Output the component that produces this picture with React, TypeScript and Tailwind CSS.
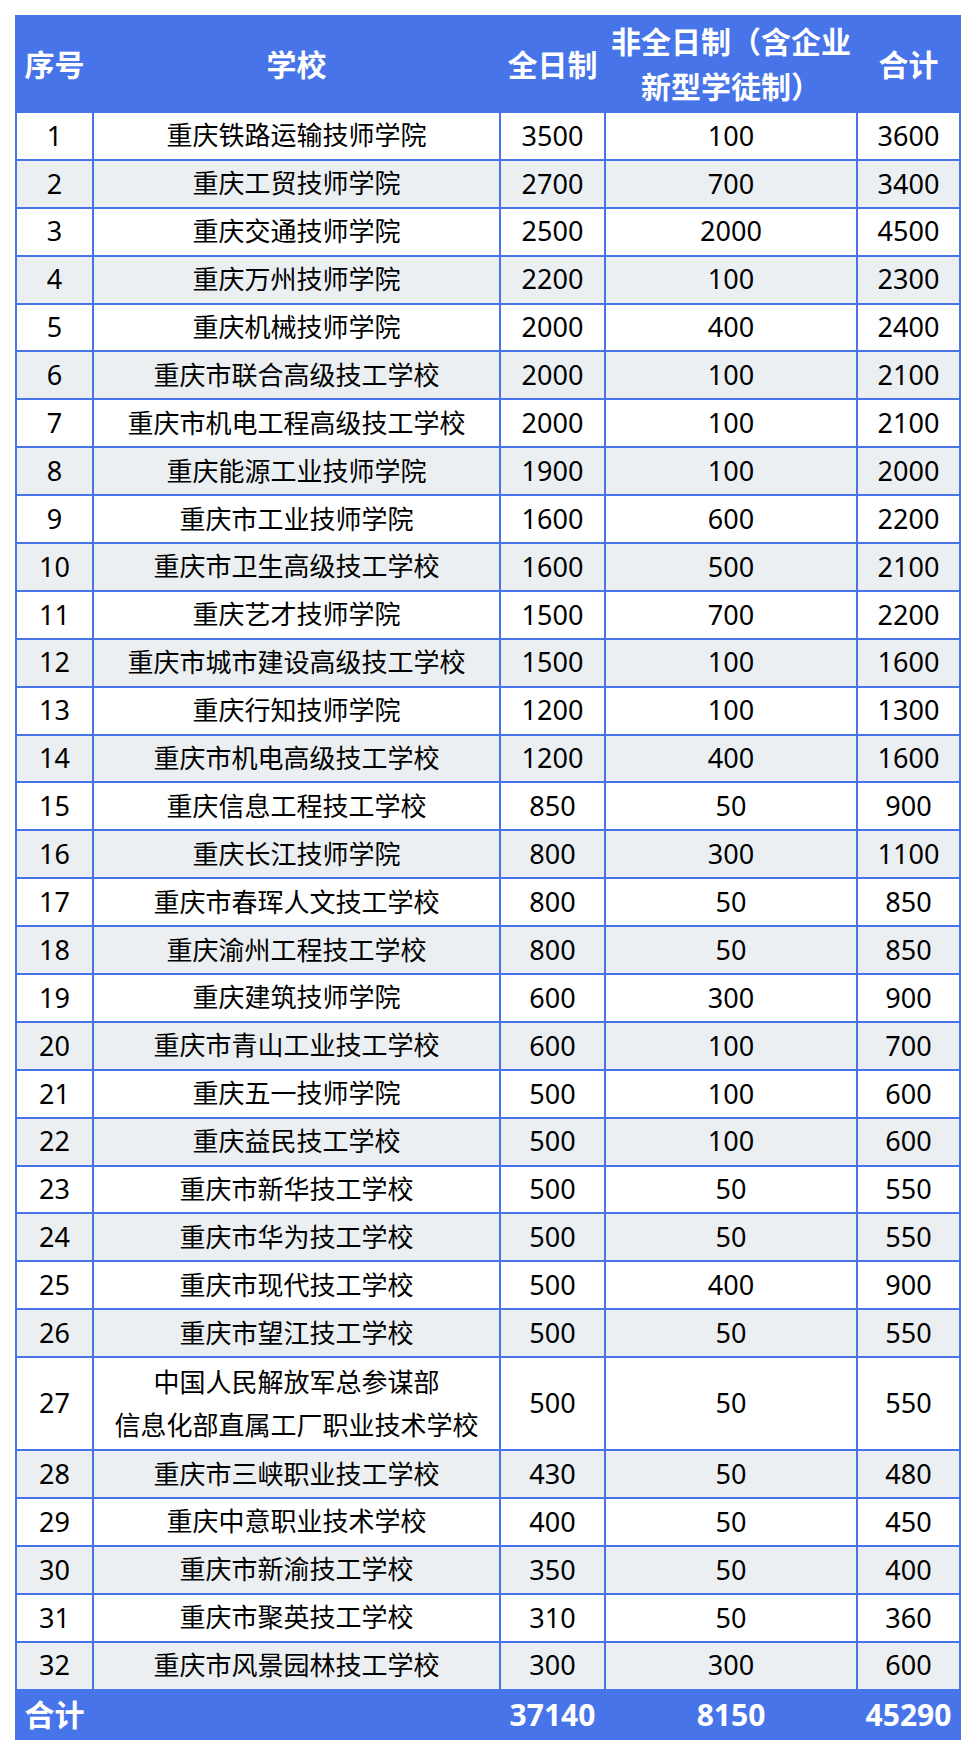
type Row = [string, string, string, string];

const ROWS: Row[] = [
  ['重庆铁路运输技师学院', '3500', '100', '3600'],
  ['重庆工贸技师学院', '2700', '700', '3400'],
  ['重庆交通技师学院', '2500', '2000', '4500'],
  ['重庆万州技师学院', '2200', '100', '2300'],
  ['重庆机械技师学院', '2000', '400', '2400'],
  ['重庆市联合高级技工学校', '2000', '100', '2100'],
  ['重庆市机电工程高级技工学校', '2000', '100', '2100'],
  ['重庆能源工业技师学院', '1900', '100', '2000'],
  ['重庆市工业技师学院', '1600', '600', '2200'],
  ['重庆市卫生高级技工学校', '1600', '500', '2100'],
  ['重庆艺才技师学院', '1500', '700', '2200'],
  ['重庆市城市建设高级技工学校', '1500', '100', '1600'],
  ['重庆行知技师学院', '1200', '100', '1300'],
  ['重庆市机电高级技工学校', '1200', '400', '1600'],
  ['重庆信息工程技工学校', '850', '50', '900'],
  ['重庆长江技师学院', '800', '300', '1100'],
  ['重庆市春珲人文技工学校', '800', '50', '850'],
  ['重庆渝州工程技工学校', '800', '50', '850'],
  ['重庆建筑技师学院', '600', '300', '900'],
  ['重庆市青山工业技工学校', '600', '100', '700'],
  ['重庆五一技师学院', '500', '100', '600'],
  ['重庆益民技工学校', '500', '100', '600'],
  ['重庆市新华技工学校', '500', '50', '550'],
  ['重庆市华为技工学校', '500', '50', '550'],
  ['重庆市现代技工学校', '500', '400', '900'],
  ['重庆市望江技工学校', '500', '50', '550'],
  ['中国人民解放军总参谋部\n信息化部直属工厂职业技术学校', '500', '50', '550'],
  ['重庆市三峡职业技工学校', '430', '50', '480'],
  ['重庆中意职业技术学校', '400', '50', '450'],
  ['重庆市新渝技工学校', '350', '50', '400'],
  ['重庆市聚英技工学校', '310', '50', '360'],
  ['重庆市风景园林技工学校', '300', '300', '600'],
];

const HEAD = 'flex items-center justify-center bg-[#4775e9] text-center text-[30px] font-bold leading-[45px] text-white';
const FOOT = 'flex h-[47px] items-center justify-center bg-[#4775e9] text-[30px] font-bold text-white';

export default function App() {
  return (
    <div className="min-h-[1756px] bg-white p-[15px] font-['Noto_Sans','Noto_Sans_CJK_SC',sans-serif] text-black">
      <div className="grid w-[946px] grid-cols-[75px_405px_103px_250px_101px] gap-[2px] bg-[#4775e9] p-[2px]">
        <div className={HEAD + ' h-[94px]'}>序号</div>
        <div className={HEAD}>学校</div>
        <div className={HEAD}>全日制</div>
        <div className={HEAD}>
          非全日制（含企业
          <br />
          新型学徒制）
        </div>
        <div className={HEAD}>合计</div>

        {ROWS.map((r, i) => {
          const bg = i % 2 === 0 ? 'bg-white' : 'bg-[#eceff2]';
          const tall = r[0].includes('\n');
          const cell =
            'flex items-center justify-center text-center ' +
            bg +
            (tall ? ' h-[91px]' : ' h-[45.9px]');
          const num = cell + ' text-[27px]';
          return [
            <div key={`n${i}`} className={num}>{i + 1}</div>,
            <div key={`s${i}`} className={cell + ' whitespace-pre-line text-[26px] leading-[43px]'}>{r[0]}</div>,
            <div key={`a${i}`} className={num}>{r[1]}</div>,
            <div key={`b${i}`} className={num}>{r[2]}</div>,
            <div key={`c${i}`} className={num}>{r[3]}</div>,
          ];
        })}

        <div className={FOOT}>合计</div>
        <div className={FOOT}></div>
        <div className={FOOT}>37140</div>
        <div className={FOOT}>8150</div>
        <div className={FOOT}>45290</div>
      </div>
    </div>
  );
}
